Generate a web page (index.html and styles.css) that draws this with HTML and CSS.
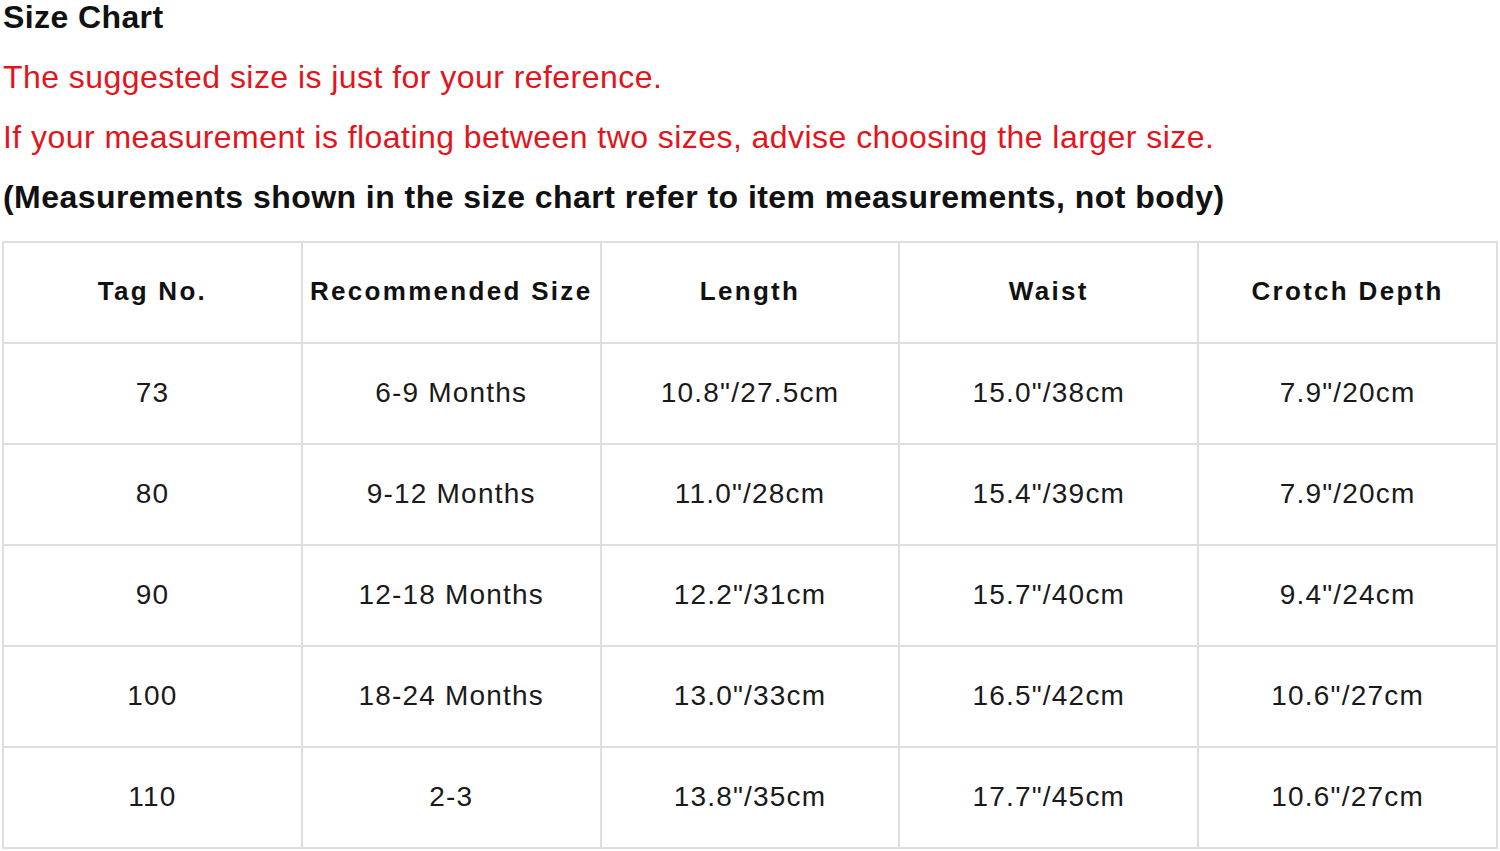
FILE: index.html
```html
<!DOCTYPE html>
<html>
<head>
<meta charset="utf-8">
<link rel="stylesheet" href="styles.css">
</head>
<body>
<div class="page">
  <h1 class="title">Size Chart</h1>
  <p class="note red">The suggested size is just for your reference.</p>
  <p class="note red">If your measurement is floating between two sizes, advise choosing the larger size.</p>
  <p class="note bold">(Measurements shown in the size chart refer to item measurements, not body)</p>
  <table class="chart">
    <tr class="head"><td>Tag No.</td><td>Recommended Size</td><td>Length</td><td>Waist</td><td>Crotch Depth</td></tr>
    <tr><td>73</td><td>6-9 Months</td><td>10.8"/27.5cm</td><td>15.0"/38cm</td><td>7.9"/20cm</td></tr>
    <tr><td>80</td><td>9-12 Months</td><td>11.0"/28cm</td><td>15.4"/39cm</td><td>7.9"/20cm</td></tr>
    <tr><td>90</td><td>12-18 Months</td><td>12.2"/31cm</td><td>15.7"/40cm</td><td>9.4"/24cm</td></tr>
    <tr><td>100</td><td>18-24 Months</td><td>13.0"/33cm</td><td>16.5"/42cm</td><td>10.6"/27cm</td></tr>
    <tr><td>110</td><td>2-3</td><td>13.8"/35cm</td><td>17.7"/45cm</td><td>10.6"/27cm</td></tr>
  </table>
</div>
</body>
</html>
```
FILE: styles.css
```css
html, body { margin: 0; padding: 0; background: #fff; }
body { font-family: "Liberation Sans", Arial, sans-serif; color: #111; }
.page { padding: 0 0 0 3px; }
.title { margin: 0; font-size: 32px; line-height: 34px; font-weight: bold; letter-spacing: 0.4px; }
.note { margin: 0; font-size: 32px; line-height: 60px; letter-spacing: 0.45px; }
.title + .note { margin-top: 13px; }
.red { color: #e3141c; }
.bold { font-weight: bold; }
.chart { margin: 14px 0 0 -1px; width: 1496px; border-collapse: collapse; table-layout: fixed; }
.chart td { border: 2px solid #dedede; height: 97px; padding: 0 0 2px; text-align: center; vertical-align: middle; font-size: 28px; letter-spacing: 1.2px; color: #1a1a1a; }
.head td { font-weight: bold; font-size: 26px; letter-spacing: 2.3px; color: #111; }
```
